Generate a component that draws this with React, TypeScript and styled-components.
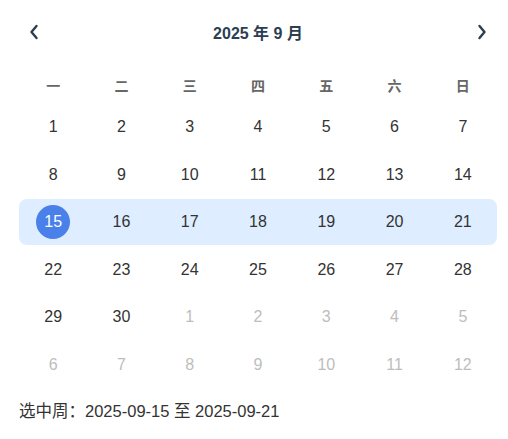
import styled, { createGlobalStyle } from "styled-components";

type Day = {
    date: number
    muted: boolean
    inWeek: boolean
    selected: boolean
}

const GlobalStyle = createGlobalStyle`
    body {
        margin: 0;
        background: #fff;
        font-family: "Liberation Sans", "Noto Sans CJK SC", sans-serif;
    }
`

const Wrapper = styled.div`
    width: 478px;
    margin-left: 19px;
    color: #333;
`

const Header = styled.div`
    margin-top: 14px;
    height: 36px;
    display: flex;
    align-items: center;
    justify-content: space-between;
`

const Title = styled.h3`
    margin: 0;
    font-size: 16px;
    font-weight: 700;
    color: #2c3e50;
`

const NavButton = styled.button`
    width: 30px;
    height: 30px;
    padding: 0;
    border: none;
    background: transparent;
    display: flex;
    align-items: center;
    justify-content: center;
    color: #2c3e50;
    cursor: pointer;
`

const Weekdays = styled.div`
    margin-top: 18px;
    height: 34px;
    display: grid;
    grid-template-columns: repeat(7, 1fr);
    align-items: center;
`

const Weekday = styled.div`
    text-align: center;
    font-size: 14px;
    font-weight: 700;
    color: #666;
`

const DaysGrid = styled.div`
    margin-top: 2px;
    display: grid;
    grid-template-columns: repeat(7, 1fr);
    grid-auto-rows: 46px;
    row-gap: 1.5px;
`

const Cell = styled.div<{ $inWeek: boolean; $first: boolean; $last: boolean }>`
    display: flex;
    align-items: center;
    justify-content: center;
    background: ${p => p.$inWeek ? "#deedff" : "transparent"};
    border-radius: ${p => p.$first ? "8px 0 0 8px" : p.$last ? "0 8px 8px 0" : "0"};
`

const Num = styled.span<{ $muted: boolean; $selected: boolean }>`
    width: 34px;
    height: 34px;
    border-radius: 50%;
    display: flex;
    align-items: center;
    justify-content: center;
    font-size: 16px;
    color: ${p => p.$selected ? "#fff" : p.$muted ? "#bdbdbd" : "#333"};
    background: ${p => p.$selected ? "#4a80ea" : "transparent"};
`

const Footer = styled.p`
    margin: 12px 0 0;
    line-height: 22px;
    font-size: 16.5px;
    color: #333;
`

const weekdays = ["一", "二", "三", "四", "五", "六", "日"]

function buildDays(): Day[] {
    const days: Day[] = []
    // 2025-09-01 is a Monday, 30 days, then fill from October
    for (let i = 0; i < 42; i++) {
        const muted = i >= 30
        const date = muted ? i - 29 : i + 1
        days.push({
            date,
            muted,
            inWeek: i >= 14 && i <= 20,
            selected: i === 14
        })
    }
    return days
}

function Chevron({ dir }: { dir: "left" | "right" }) {
    return (
        <svg width="10" height="16" viewBox="0 0 10 16">
            <polyline
                points={dir === "left" ? "7.5,2 2.5,8 7.5,14" : "2.5,2 7.5,8 2.5,14"}
                fill="none"
                stroke="currentColor"
                strokeWidth="2.4"
                strokeLinecap="round"
                strokeLinejoin="round"
            />
        </svg>
    )
}

function App() {
    const days = buildDays()

    return (
        <>
            <GlobalStyle />
            <Wrapper>
                <Header>
                    <NavButton aria-label="上个月"><Chevron dir="left" /></NavButton>
                    <Title>2025 年 9 月</Title>
                    <NavButton aria-label="下个月"><Chevron dir="right" /></NavButton>
                </Header>
                <Weekdays>
                    {weekdays.map(w => <Weekday key={w}>{w}</Weekday>)}
                </Weekdays>
                <DaysGrid>
                    {
                        days.map((d, i) =>
                            <Cell key={i} $inWeek={d.inWeek} $first={i % 7 === 0} $last={i % 7 === 6}>
                                <Num $muted={d.muted} $selected={d.selected}>{d.date}</Num>
                            </Cell>
                        )
                    }
                </DaysGrid>
                <Footer>选中周：2025-09-15 至 2025-09-21</Footer>
            </Wrapper>
        </>
    )
}

export default App;
